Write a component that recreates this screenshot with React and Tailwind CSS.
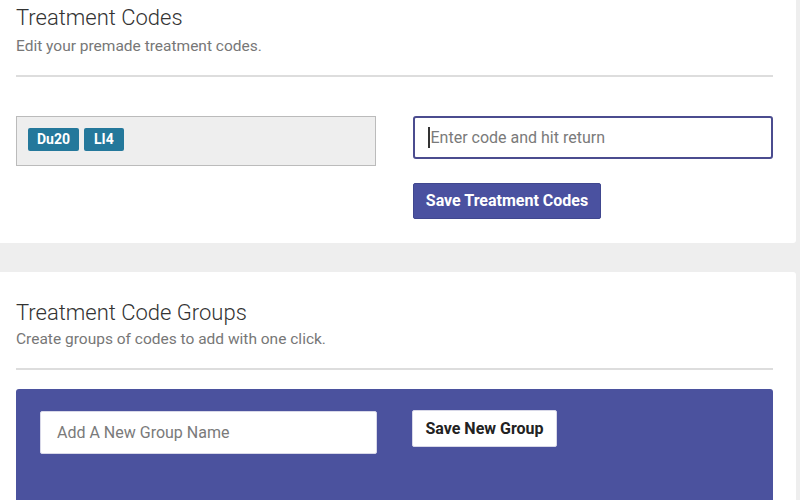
export default function App() {
  return (
    <div className="w-[800px] h-[500px] overflow-hidden bg-[#eeeeee]" style={{ fontFamily: "Roboto, 'Liberation Sans', sans-serif" }}>
      <div className="w-[796px] h-[243px] bg-white rounded-br-[3px] px-4 pt-[3px]">
        <h1 className="text-[22px] leading-[30px] font-light text-[#333]">Treatment Codes</h1>
        <p className="text-[15.5px] leading-5 text-[#777] mt-[3px]">Edit your premade treatment codes.</p>
        <div className="mt-[19px] h-[2px] w-[757px] bg-[#dddddd]" />
        <div className="mt-[39px] flex gap-[37px]">
          <div className="w-[360px] h-[50px] bg-[#eeeeee] border border-[#bbbbbb] px-[11px] pt-[11px] flex gap-[5px] items-start">
            <span className="h-[23px] px-[9px] rounded-[2px] bg-[#24789b] text-white text-[14px] font-bold leading-[23px]">Du20</span>
            <span className="h-[23px] px-[10px] rounded-[2px] bg-[#24789b] text-white text-[14px] font-bold leading-[23px]">LI4</span>
          </div>
          <div className="w-[360px] flex flex-col items-start">
            <div className="w-[360px] h-[43px] border-2 border-[#4b4c8f] rounded-[3px] flex items-center pl-[13px]">
              <span className="w-[1.5px] h-[21px] bg-[#333] mr-[1px]" />
              <span className="text-[16px] text-[#7a7a7a]">Enter code and hit return</span>
            </div>
            <button className="mt-[24px] h-[36px] w-[188px] bg-[#4a51a0] rounded-[2px] text-white text-[16px] font-bold border border-[#40478f]">Save Treatment Codes</button>
          </div>
        </div>
      </div>
      <div className="mt-[29px] w-[796px] h-[300px] bg-white rounded-tr-[3px] px-4 pt-[26px]">
        <h2 className="text-[22px] leading-[30px] font-light text-[#333]">Treatment Code Groups</h2>
        <p className="text-[15.5px] leading-5 text-[#777] mt-[1px]">Create groups of codes to add with one click.</p>
        <div className="mt-[19px] h-[2px] w-[757px] bg-[#dddddd]" />
        <div className="mt-[19px] w-[757px] h-[200px] bg-[#4b529e] rounded-t-[3px] pl-[24px] pt-[22px] flex gap-[35px] items-start">
          <div className="w-[337px] h-[43px] bg-white rounded-[2px] border border-[#d8d8e8] flex items-center pl-[16px]">
            <span className="text-[16px] text-[#7a7a7a]">Add A New Group Name</span>
          </div>
          <button className="h-[37px] w-[145px] -mt-[1px] bg-white rounded-[2px] text-[#222] text-[16px] font-bold border border-[#d8d8e8]">Save New Group</button>
        </div>
      </div>
    </div>
  );
}
